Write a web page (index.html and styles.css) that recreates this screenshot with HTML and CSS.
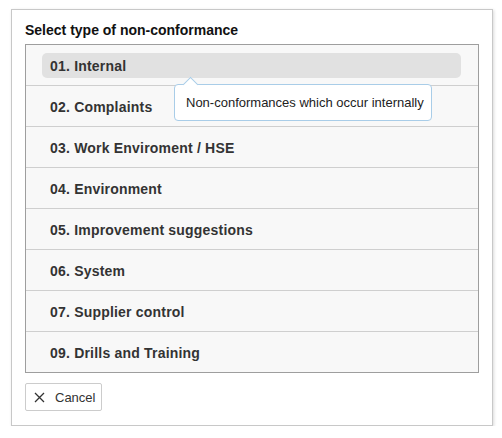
FILE: index.html
```html
<!DOCTYPE html>
<html>
<head>
<meta charset="utf-8">
<link rel="stylesheet" href="styles.css">
</head>
<body>
<div class="panel">
  <div class="title">Select type of non-conformance</div>
  <div class="list">
    <div class="row"><div class="item active">01. Internal</div>
      <div class="tooltip">Non-conformances which occur internally</div>
    </div>
    <div class="row"><div class="item">02. Complaints</div></div>
    <div class="row"><div class="item">03. Work Enviroment / HSE</div></div>
    <div class="row"><div class="item">04. Environment</div></div>
    <div class="row"><div class="item">05. Improvement suggestions</div></div>
    <div class="row"><div class="item">06. System</div></div>
    <div class="row"><div class="item">07. Supplier control</div></div>
    <div class="row"><div class="item">09. Drills and Training</div></div>
  </div>
  <button class="cancel"><svg class="x" width="11" height="11" viewBox="0 0 11 11"><path d="M1 1L10 10M10 1L1 10" stroke="#333" stroke-width="1.3" fill="none"/></svg><span>Cancel</span></button>
</div>
</body>
</html>
```
FILE: styles.css
```css
html, body {
  margin: 0;
  padding: 0;
  background: #fff;
}
body {
  font-family: "Liberation Sans", Arial, sans-serif;
  color: #333;
}
.panel {
  box-sizing: border-box;
  margin: 9px 0 0 11px;
  width: 482px;
  height: 417px;
  border: 1px solid #c8c8c8;
  box-shadow: 1px 1px 3px rgba(0,0,0,0.15);
  padding: 12px 13px 0 13px;
  background: #fff;
}
.title {
  font-size: 14px;
  font-weight: bold;
  line-height: 17px;
  color: #111;
  margin-bottom: 5px;
}
.list {
  width: 454px;
  box-sizing: border-box;
  border: 1px solid #9e9e9e;
  background: #f8f8f8;
}
.row {
  position: relative;
  height: 41px;
  box-sizing: border-box;
  padding: 8px 17px 0 16px;
  border-bottom: 1px solid #cfcfcf;
}
.row:last-child {
  border-bottom: none;
  height: 40px;
}
.item {
  height: 25px;
  line-height: 27px;
  padding-left: 8px;
  font-size: 14px;
  font-weight: bold;
  letter-spacing: 0.2px;
  color: #333;
  border-radius: 5px;
}
.item.active {
  background: #e1e1e1;
}
.tooltip {
  position: absolute;
  left: 148px;
  top: 39px;
  z-index: 2;
  box-sizing: border-box;
  width: 258px;
  height: 37px;
  background: #fff;
  border: 1px solid #a9cde8;
  border-radius: 4px;
  font-size: 13px;
  line-height: 36px;
  padding-left: 11px;
  color: #222;
  font-weight: normal;
  white-space: nowrap;
}
.tooltip::before {
  content: "";
  position: absolute;
  left: 10px;
  top: -6px;
  width: 10px;
  height: 10px;
  background: #fff;
  border-top: 1px solid #a9cde8;
  border-left: 1px solid #a9cde8;
  transform: rotate(45deg);
}
.cancel {
  margin-top: 10px;
  box-sizing: border-box;
  width: 77px;
  height: 28px;
  border: 1px solid #cccccc;
  border-radius: 2px;
  background: #fff;
  display: flex;
  align-items: center;
  padding: 0 0 0 8px;
  font-family: "Liberation Sans", Arial, sans-serif;
  font-size: 13px;
  color: #333;
}
.cancel .x {
  margin-right: 10px;
}
```
